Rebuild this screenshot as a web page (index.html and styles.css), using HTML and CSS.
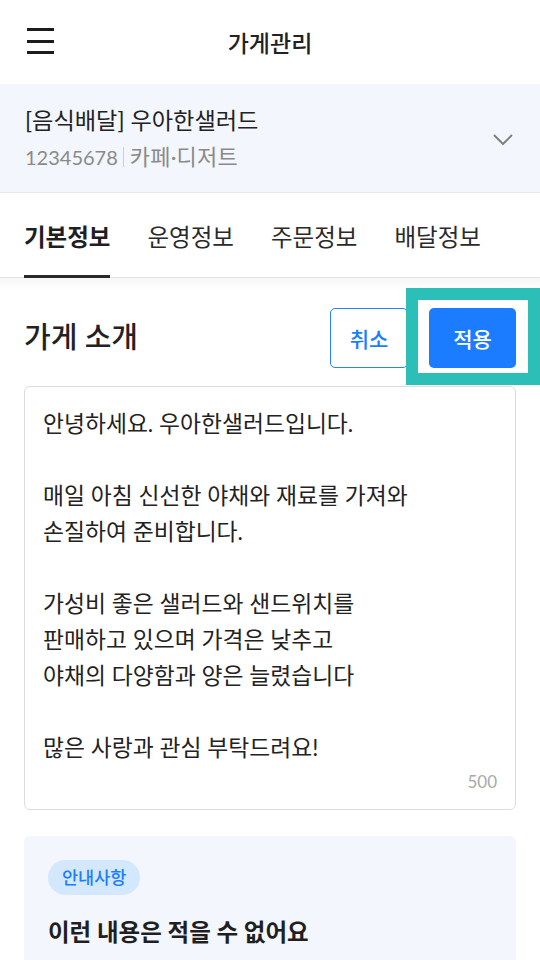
FILE: index.html
```html
<!DOCTYPE html>
<html lang="ko">
<head>
<meta charset="utf-8">
<title>가게관리</title>
<link rel="stylesheet" href="styles.css">
</head>
<body>
<div class="app">
  <header class="topbar">
    <div class="menu" aria-label="메뉴">
      <span></span><span></span><span></span>
    </div>
    <h1 class="title">가게관리</h1>
    <div></div>
  </header>

  <section class="store">
    <div class="store-info">
      <div class="store-name">[음식배달] 우아한샐러드</div>
      <div class="store-sub"><span class="num">12345678</span><span class="bar"></span><span class="cat">카페·디저트</span></div>
    </div>
    <svg class="chev" width="20" height="12" viewBox="0 0 20 12"><path d="M1.5 1.5 L10 10 L18.5 1.5" fill="none" stroke="#7a7a7a" stroke-width="1.8" stroke-linecap="round" stroke-linejoin="round"/></svg>
  </section>

  <nav class="tabs">
    <div class="tab active">기본정보</div>
    <div class="tab">운영정보</div>
    <div class="tab">주문정보</div>
    <div class="tab">배달정보</div>
  </nav>
  <div class="shade"></div>

  <main class="content">
    <div class="title-row">
      <h2 class="section-title">가게 소개</h2>
      <div class="actions">
        <button class="btn btn-outline">취소</button>
        <button class="btn btn-primary">적용</button>
        <div class="highlight"></div>
      </div>
    </div>

    <div class="textbox">
      <p class="intro">안녕하세요. 우아한샐러드입니다.<br><br>매일 아침 신선한 야채와 재료를 가져와<br>손질하여 준비합니다.<br><br>가성비 좋은 샐러드와 샌드위치를<br>판매하고 있으며 가격은 낮추고<br>야채의 다양함과 양은 늘렸습니다<br><br>많은 사랑과 관심 부탁드려요!</p>
      <div class="count">500</div>
    </div>

    <div class="notice">
      <span class="badge">안내사항</span>
      <h3 class="notice-title">이런 내용은 적을 수 없어요</h3>
    </div>
  </main>
</div>
</body>
</html>
```

FILE: styles.css
```css
* { box-sizing: border-box; }
html, body { margin: 0; padding: 0; background: #fff; }
body {
  font-family: Lato, "Noto Sans CJK KR", "Noto Sans", sans-serif;
  color: #222;
  width: 540px;
  height: 960px;
  overflow: hidden;
}
.app { width: 540px; }

.topbar {
  height: 84px;
  display: grid;
  grid-template-columns: 1fr auto 1fr;
  align-items: center;
  padding: 0 27px;
}
.menu {
  width: 27px;
  display: flex;
  flex-direction: column;
  gap: 8.5px;
  margin-top: -2px;
}
.menu span {
  display: block;
  height: 3px;
  background: #1c1c1c;
}
.title {
  margin: 0;
  font-size: 23px;
  font-weight: 500;
  color: #222;
}

.store {
  height: 109px;
  background: #f3f6fc;
  border-bottom: 1px solid #e5e8ee;
  display: flex;
  align-items: center;
  justify-content: space-between;
  padding: 0 27px 0 25px;
}
.store-info { display: flex; flex-direction: column; }
.store-name {
  font-size: 23.2px;
  line-height: 30px;
  color: #222;
  margin-top: -2px;
}
.store-sub {
  margin-top: 9px;
  line-height: 26px;
  color: #8a8a8a;
  display: flex;
  align-items: center;
}
.store-sub .num { font-size: 20px; }
.store-sub .cat { font-size: 22px; letter-spacing: 0.2px; }
.store-sub .bar {
  display: inline-block;
  width: 1px;
  height: 20px;
  background: #cfcfcf;
  margin: 0 6px 0 5px;
}
.chev { margin-top: 4px; }

.tabs {
  height: 85px;
  display: flex;
  align-items: stretch;
  gap: 37px;
  padding: 0 24px;
  border-bottom: 1px solid #e3e3e3;
}
.tab {
  display: flex;
  align-items: center;
  font-size: 23.5px;
  color: #2a2a2a;
  padding-top: 4px;
  border-bottom: 3px solid transparent;
  margin-bottom: -1px;
}
.tab.active {
  font-weight: 700;
  color: #1f1f1f;
  border-bottom-color: #2a2a2a;
}
.shade {
  height: 12px;
  background: linear-gradient(#f6f6f6, #fff);
}

.content { padding: 0 24px; }
.title-row {
  display: flex;
  align-items: center;
  justify-content: space-between;
  height: 96px;
  padding-bottom: 2px;
}
.section-title {
  margin: 0;
  font-size: 29px;
  font-weight: 500;
  color: #222;
  margin-top: -4px;
}
.actions {
  position: relative;
  display: flex;
  gap: 21px;
  margin-top: 2px;
}
.btn {
  font-family: "Noto Sans CJK KR", sans-serif;
  font-size: 21px;
  font-weight: 500;
  height: 60px;
  border-radius: 5px;
  cursor: pointer;
  padding: 0;
}
.btn-outline {
  width: 78px;
  background: #fff;
  border: 1.5px solid #2483ff;
  color: #1b7cff;
}
.btn-primary {
  width: 87px;
  background: #1b7cff;
  border: none;
  color: #fff;
}
.highlight {
  position: absolute;
  left: 76px;
  top: -20px;
  width: 134px;
  height: 97px;
  border: 12px solid #2bbfb8;
  pointer-events: none;
}

.textbox {
  height: 424px;
  border: 1px solid #dcdcdc;
  border-radius: 6px;
  padding: 18px 18px 0 18px;
  display: flex;
  flex-direction: column;
}
.intro {
  margin: 0;
  font-size: 22.8px;
  line-height: 36px;
  color: #222;
  flex: 1;
}
.count {
  align-self: flex-end;
  font-size: 17px;
  color: #a9a9a9;
  margin-bottom: 17px;
}

.notice {
  margin-top: 26px;
  background: #f3f6fc;
  border-radius: 6px;
  padding: 24px 24px 30px;
}
.badge {
  display: inline-block;
  background: #d3e8fd;
  color: #1b7cff;
  font-size: 17.5px;
  font-weight: 500;
  line-height: 35px;
  padding: 0 14px;
  border-radius: 18px;
}
.notice-title {
  margin: 19px 0 0;
  font-size: 23.5px;
  font-weight: 700;
  color: #1f1f1f;
}
```
